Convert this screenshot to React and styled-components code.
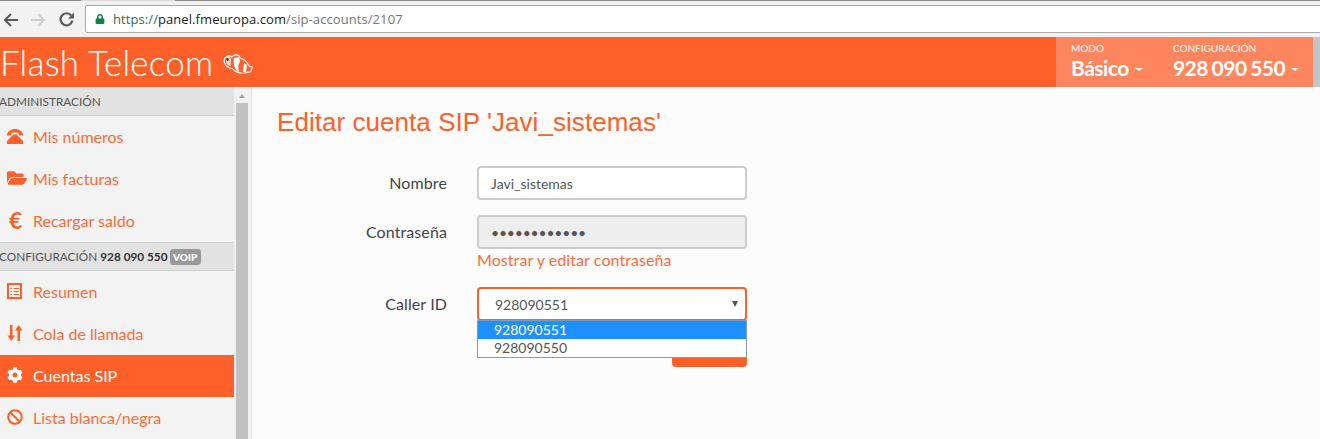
import { createGlobalStyle, styled } from "styled-components";
import { FaBan, FaCog, FaFolderOpen, FaLock } from "react-icons/fa";

const ORANGE = "#ff5f28";

const GlobalStyle = createGlobalStyle`
    html, body {
        margin: 0;
        padding: 0;
        overflow: hidden;
    }

    body {
        font-family: Lato, "Liberation Sans", sans-serif;
        background-color: #fcfcfc;
    }

    * {
        box-sizing: border-box;
    }
`;

const BackIcon = ({ color, flip }) => (
    <svg width="15" height="14" viewBox="0 0 15 14" fill="none" stroke={color} strokeWidth="2"
        style={flip ? { transform: "scaleX(-1)" } : undefined}>
        <path d="M15 7 H2 M8 1 L2 7 L8 13" />
    </svg>
);

const ReloadIcon = () => (
    <svg width="15" height="15" viewBox="0 0 15 15" fill="none" stroke="#5a5a5a" strokeWidth="2.2">
        <path d="M12.3 3.6 A6 6 0 1 0 13.4 8.6" />
        <path d="M15 0.5 V6.5 H9 Z" fill="#5a5a5a" stroke="none" />
    </svg>
);

const PhoneIcon = () => (
    <svg width="16" height="15" viewBox="0 0 16 15" fill={ORANGE}>
        <path d="M0 5.5 C1 1.5 5 0 8 0 C11 0 15 1.5 16 5.5 L16 6.5 L12 6.5 L11.5 4 C10 3.3 6 3.3 4.5 4 L4 6.5 L0 6.5 Z" />
        <path d="M6.5 5.5 H9.5 L16 12 V15 H0 V12 Z" />
    </svg>
);

const ListIcon = () => (
    <svg width="15" height="16" viewBox="0 0 15 16" fill="none" stroke={ORANGE}>
        <rect x="1" y="1" width="13" height="14" strokeWidth="2" />
        <path d="M3.5 5.5 H5 M6.5 5.5 H12 M3.5 8.5 H5 M6.5 8.5 H12 M3.5 11.5 H5 M6.5 11.5 H12" />
    </svg>
);

const SortIcon = () => (
    <svg width="16" height="16" viewBox="0 0 16 16" fill={ORANGE}>
        <path d="M3 0 H5.5 V10.5 H8 L4.2 16 L0.5 10.5 H3 Z" />
        <path d="M10.5 16 H13 V5.5 H15.5 L11.8 0 L8 5.5 H10.5 Z" />
    </svg>
);

const FishLogo = () => (
    <svg width="30" height="21" viewBox="0 0 30 21" fill="none">
        <path d="M1 6 C2 2 6 1 9 3 C11 0 16 0 17 4 C21 5 24 8 26 12 L29 13 C29 17 27 19 25 18 C21 20 14 20 10 15 C5 14 1 11 1 6 Z" fill={ORANGE} stroke="#fff" strokeWidth="1.2" />
        <path d="M3 3 C5 2 8 3 8 5 C8 8 7 10 8 12 C4 12 2 8 3 3 Z" fill="#ffd9c9" />
        <path d="M11 4 L16 3 L17 8 C15 10 15 14 16 18 L13 16 C11 12 10 8 11 4 Z" fill="#fff" />
        <path d="M21 9 L24 11 L23 18 L20 18 Z" fill="#fff" />
        <circle cx="4.5" cy="5.5" r="1.4" fill="#7a2a10" />
    </svg>
);

const MenuList = ({ items }) => items.map((item) => (
    <MenuItem key={item.label} $active={item.active}>
        <MenuIcon>{item.icon}</MenuIcon>
        {item.label}
    </MenuItem>
));

const App = () => {
    const menuTop = [
        { label: "Mis números", icon: <PhoneIcon /> },
        { label: "Mis facturas", icon: <FaFolderOpen size={20} color={ORANGE} /> },
        { label: "Recargar saldo", icon: <Euro>€</Euro> },
    ];

    const menuBottom = [
        { label: "Resumen", icon: <ListIcon /> },
        { label: "Cola de llamada", icon: <SortIcon /> },
        { label: "Cuentas SIP", icon: <FaCog size={16} color="#fff" />, active: true },
        { label: "Lista blanca/negra", icon: <FaBan size={16} color={ORANGE} /> },
    ];

    return (
        <Page>
            <GlobalStyle />

            <BrowserBar>
                <TabEdge><span /><span /><span /></TabEdge>
                <BrowserRow>
                    <NavButtons>
                        <BackIcon color="#5a5a5a" />
                        <BackIcon color="#d0d0d0" flip />
                        <ReloadIcon />
                    </NavButtons>
                    <AddressBar>
                        <FaLock size={10} color="#0b8043" />
                        <Url>
                            <Scheme>https://</Scheme>panel.fmeuropa.com<UrlPath>/sip-accounts/2107</UrlPath>
                        </Url>
                    </AddressBar>
                </BrowserRow>
            </BrowserBar>

            <Header>
                <Brand>Flash Telecom <FishLogo /></Brand>
                <HeaderRight>
                    <HeaderMenu>
                        <HeaderBlock>
                            <small>MODO</small>
                            <strong>Básico<Caret /></strong>
                        </HeaderBlock>
                        <HeaderBlock>
                            <small>CONFIGURACIÓN</small>
                            <strong>928 090 550<Caret /></strong>
                        </HeaderBlock>
                    </HeaderMenu>
                    <HeaderEdge />
                </HeaderRight>
            </Header>

            <Body>
                <Sidebar>
                    <SectionTitle>ADMINISTRACIÓN</SectionTitle>
                    <MenuList items={menuTop} />
                    <SectionTitle>
                        CONFIGURACIÓN<b>928 090 550</b><Badge>VOIP</Badge>
                    </SectionTitle>
                    <MenuList items={menuBottom} />
                </Sidebar>

                <Scrollbar>
                    <ScrollArrow />
                    <ScrollThumb />
                </Scrollbar>

                <Content>
                    <Title>Editar cuenta SIP 'Javi_sistemas'</Title>
                    <Form>
                        <Label>Nombre</Label>
                        <Field>Javi_sistemas</Field>

                        <Label>Contraseña</Label>
                        <div>
                            <Field $disabled $dots>••••••••••••</Field>
                            <FieldLink>Mostrar y editar contraseña</FieldLink>
                        </div>

                        <Label>Caller ID</Label>
                        <SelectWrap>
                            <Field $focus>
                                928090551
                                <SelectArrow />
                            </Field>
                            <Dropdown>
                                <Option $selected>928090551</Option>
                                <Option>928090550</Option>
                            </Dropdown>
                            <SaveButton />
                        </SelectWrap>
                    </Form>
                </Content>
            </Body>
        </Page>
    )
};

const Page = styled.div`
    display: flex;
    flex-direction: column;
    width: 1320px;
    height: 439px;
    overflow: hidden;
`;

const BrowserBar = styled.div`
    height: 37px;
    background-color: #f2f2f2;
    flex-shrink: 0;
`;

const TabEdge = styled.div`
    display: flex;
    height: 2px;

    span {
        height: 1px;
        background-color: #8c8c8c;
    }

    span:nth-child(1) { width: 81px; }
    span:nth-child(2) { width: 94px; background-color: #dcdcdc; }
    span:nth-child(3) { flex: 1; }
`;

const BrowserRow = styled.div`
    display: flex;
    align-items: center;
    height: 28px;
    margin-top: 3px;
`;

const NavButtons = styled.div`
    display: flex;
    align-items: center;
    gap: 13px;
    width: 85px;
    padding: 1px 0 0 3px;
`;

const AddressBar = styled.div`
    display: flex;
    align-items: center;
    flex: 1;
    height: 28px;
    padding-left: 9px;
    margin-right: -4px;
    background-color: #fff;
    border: 1px solid #a9a9a9;
    border-radius: 2px;
`;

const Url = styled.div`
    margin-left: 8px;
    font-family: "Open Sans", sans-serif;
    font-size: 13px;
    letter-spacing: 0.08px;
    color: #222;
`;

const Scheme = styled.span`
    color: #33695a;
`;

const UrlPath = styled.span`
    color: #757575;
`;

const Header = styled.div`
    display: flex;
    justify-content: space-between;
    height: 50px;
    flex-shrink: 0;
    background-color: ${ORANGE};
`;

const Brand = styled.div`
    display: flex;
    align-items: center;
    gap: 10px;
    font-family: Lato, sans-serif;
    font-weight: 300;
    font-size: 35px;
    letter-spacing: 0.2px;
    color: #fff;

    svg {
        margin-top: 4px;
    }
`;

const HeaderRight = styled.div`
    display: flex;
`;

const HeaderMenu = styled.div`
    display: flex;
    width: 257px;
    padding-left: 15px;
    gap: 30px;
    background-color: #ff855f;
`;

const HeaderEdge = styled.div`
    width: 7px;
    background-color: #c4c4c4;
`;

const HeaderBlock = styled.div`
    display: flex;
    flex-direction: column;
    padding-top: 5px;
    color: #fff;

    small {
        font-size: 10px;
        line-height: 13px;
    }

    strong {
        display: flex;
        align-items: center;
        font-size: 21px;
        line-height: 25px;
        font-weight: 700;
        letter-spacing: -0.5px;
        word-spacing: -1px;
    }
`;

const Caret = styled.span`
    display: inline-block;
    width: 0;
    height: 0;
    margin: 3px 0 0 6px;
    border-left: 4px solid transparent;
    border-right: 4px solid transparent;
    border-top: 3px solid #fff;
`;

const Body = styled.div`
    display: flex;
    flex: 1;
    min-height: 0;
`;

const Sidebar = styled.div`
    width: 234px;
    flex-shrink: 0;
    background-color: #f3f3f3;
`;

const SectionTitle = styled.div`
    display: flex;
    align-items: center;
    height: 29px;
    text-indent: -1px;
    font-size: 11.8px;
    white-space: pre;
    color: #555;
    background-color: #e2e2e2;
    border-top: 1px solid #cfcfcf;
    border-bottom: 1px solid #cfcfcf;

    &:first-child {
        border-top: none;
    }

    b {
        margin: 0 2px 0 4px;
        font-weight: 700;
        color: #333;
    }
`;

const Badge = styled.span`
    padding: 2px 3.5px;
    font-size: 10px;
    font-weight: 900;
    line-height: 12px;
    text-indent: 0;
    color: #fff;
    background-color: #999;
    border-radius: 3px;
`;

const MenuItem = styled.div`
    display: flex;
    align-items: center;
    height: 42px;
    padding-bottom: 2px;
    font-size: 16px;
    color: ${(props) => (props.$active ? "#fff" : "#ff6b38")};
    background-color: ${(props) => (props.$active ? ORANGE : "transparent")};
`;

const MenuIcon = styled.span`
    display: flex;
    align-items: center;
    width: 33px;
    padding-left: 7px;
`;

const Euro = styled.span`
    margin-left: 2px;
    font-size: 23px;
    font-weight: 700;
    line-height: 1;
    color: ${ORANGE};
`;

const Scrollbar = styled.div`
    width: 18px;
    flex-shrink: 0;
    padding: 0 3px 0 2px;
    background-color: #f1f1f1;
    border-right: 1px solid #e4e4e4;
`;

const ScrollArrow = styled.div`
    width: 0;
    height: 0;
    margin: 7px auto 5px;
    border-left: 3.5px solid transparent;
    border-right: 3.5px solid transparent;
    border-bottom: 4px solid #a3a3a3;
`;

const ScrollThumb = styled.div`
    height: 340px;
    background-color: #c1c1c1;
`;

const Content = styled.div`
    flex: 1;
    padding: 19px 0 0 25px;
    background-color: #fcfcfc;
`;

const Title = styled.h1`
    margin: 0;
    font-family: "Liberation Sans", Arial, sans-serif;
    font-size: 26px;
    font-weight: 400;
    line-height: 32px;
    letter-spacing: 0.05px;
    color: ${ORANGE};
`;

const Form = styled.div`
    display: grid;
    grid-template-columns: 170px 270px;
    column-gap: 30px;
    row-gap: 15px;
    margin-top: 28px;
`;

const Label = styled.label`
    font-size: 16px;
    line-height: 34px;
    letter-spacing: 0.1px;
    text-align: right;
    color: #444;
`;

const Field = styled.div`
    position: relative;
    height: 34px;
    padding-left: ${(props) => (props.$focus ? "16px" : "12px")};
    font-size: 14px;
    line-height: 31px;
    letter-spacing: ${(props) => (props.$dots ? "-0.2px" : "0")};
    color: #555;
    background-color: ${(props) => (props.$disabled ? "#eee" : "#fff")};
    border: 2px solid ${(props) => (props.$focus ? ORANGE : "#ccc")};
    border-radius: 4px;
`;

const FieldLink = styled.div`
    margin-bottom: 2px;
    font-size: 16px;
    line-height: 21px;
    letter-spacing: 0.07px;
    color: #ff6b38;
`;

const SelectWrap = styled.div`
    position: relative;
`;

const SelectArrow = styled.span`
    position: absolute;
    top: 12px;
    right: 7px;
    width: 0;
    height: 0;
    border-left: 3.5px solid transparent;
    border-right: 3.5px solid transparent;
    border-top: 6px solid #555;
`;

const Dropdown = styled.div`
    position: absolute;
    top: 33px;
    left: 0;
    width: 270px;
    background-color: #fff;
    border: 1px solid #7f9db9;
    z-index: 2;
`;

const Option = styled.div`
    height: 18px;
    padding-left: 16px;
    font-size: 14px;
    line-height: 18px;
    color: ${(props) => (props.$selected ? "#fff" : "#555")};
    background-color: ${(props) => (props.$selected ? "#1e90ff" : "#fff")};
`;

const SaveButton = styled.div`
    width: 75px;
    height: 34px;
    margin: 12px 0 0 auto;
    background-color: ${ORANGE};
    border-radius: 4px;
`;

export default App;
